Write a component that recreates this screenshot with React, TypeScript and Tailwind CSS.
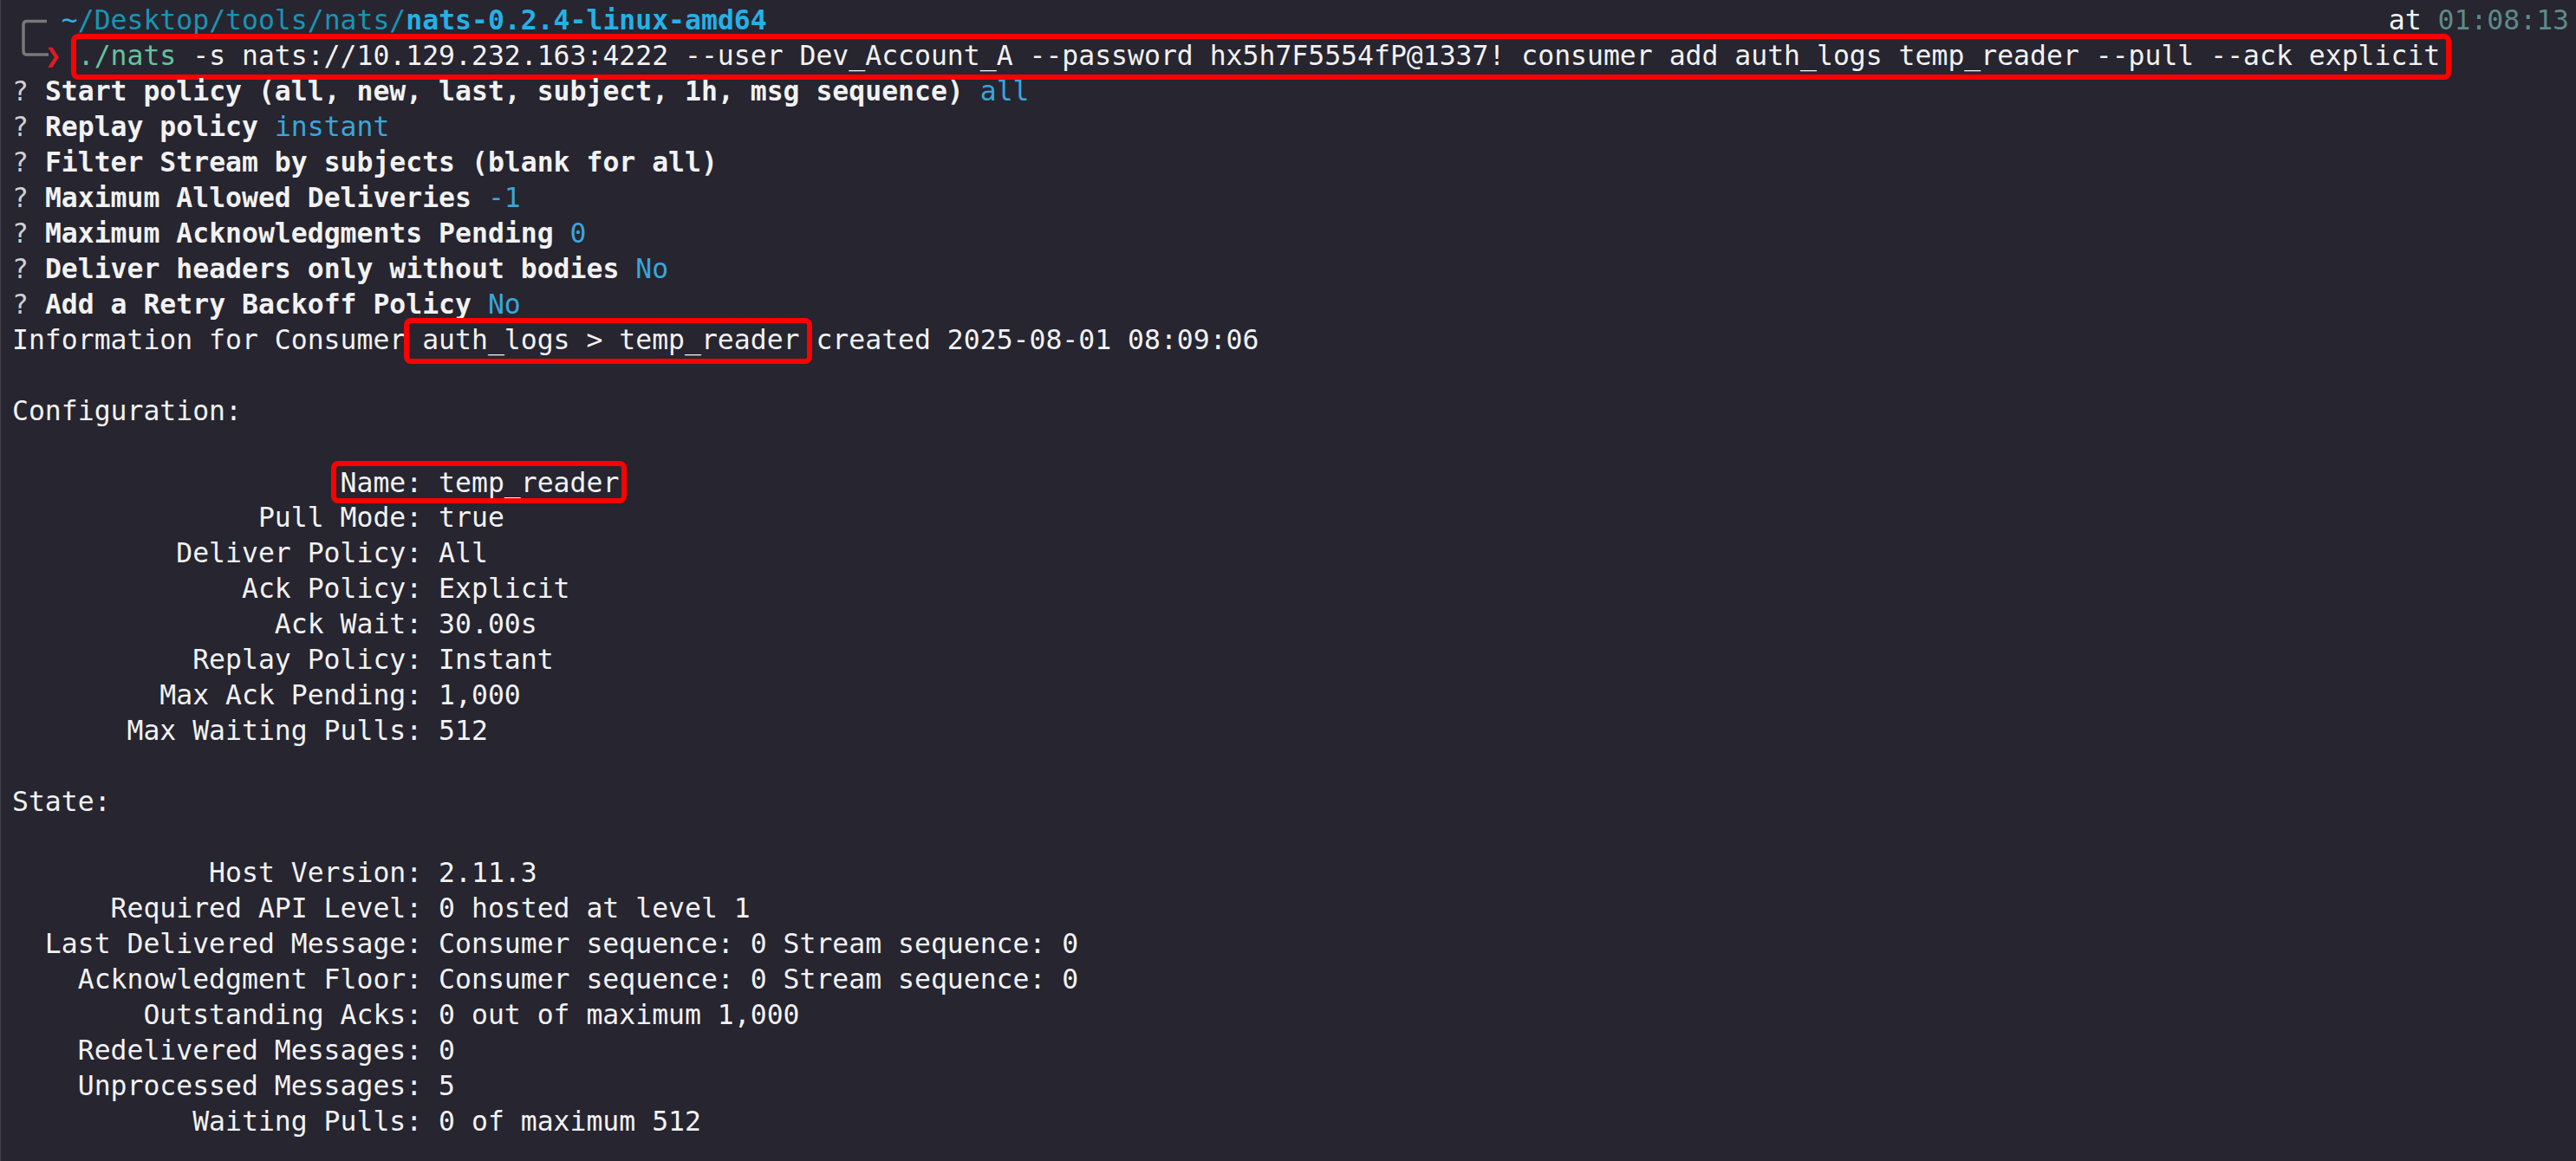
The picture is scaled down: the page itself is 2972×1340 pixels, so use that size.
import React from 'react'

const questions: { label: string; value?: string }[] = [
  { label: 'Start policy (all, new, last, subject, 1h, msg sequence)', value: 'all' },
  { label: 'Replay policy', value: 'instant' },
  { label: 'Filter Stream by subjects (blank for all)' },
  { label: 'Maximum Allowed Deliveries', value: '-1' },
  { label: 'Maximum Acknowledgments Pending', value: '0' },
  { label: 'Deliver headers only without bodies', value: 'No' },
  { label: 'Add a Retry Backoff Policy', value: 'No' },
]

const config: [string, string][] = [
  ['Pull Mode', 'true'],
  ['Deliver Policy', 'All'],
  ['Ack Policy', 'Explicit'],
  ['Ack Wait', '30.00s'],
  ['Replay Policy', 'Instant'],
  ['Max Ack Pending', '1,000'],
  ['Max Waiting Pulls', '512'],
]

const state: [string, string][] = [
  ['Host Version', '2.11.3'],
  ['Required API Level', '0 hosted at level 1'],
  ['Last Delivered Message', 'Consumer sequence: 0 Stream sequence: 0'],
  ['Acknowledgment Floor', 'Consumer sequence: 0 Stream sequence: 0'],
  ['Outstanding Acks', '0 out of maximum 1,000'],
  ['Redelivered Messages', '0'],
  ['Unprocessed Messages', '5'],
  ['Waiting Pulls', '0 of maximum 512'],
]

// right-align labels so every colon lands in column 24
const pad = (label: string) => (label + ':').padStart(25)

function Blank() {
  return <div>{'\u00a0'}</div>
}

function KeyValue({ label, value }: { label: string; value: string }) {
  return <div>{pad(label) + ' ' + value}</div>
}

export default function App() {
  return (
    <div className="w-[2972px] h-[1340px] overflow-hidden bg-[#262530] border-l border-[#45444e] pl-[13px] pr-[8px] pt-[3px] font-['DejaVu_Sans_Mono',monospace] text-[31.44px] leading-[41px] text-[#f2f2f2] whitespace-pre">
      {/* prompt */}
      <div className="flex">
        <div className="w-[37.86px] shrink-0">
          <svg width="42" height="82" viewBox="0 0 42 82" className="overflow-visible">
            <path
              d="M40 21.5 H17 Q13 21.5 13 25.5 V56 Q13 60 17 60 H42"
              fill="none"
              stroke="#787878"
              strokeWidth="3.5"
            />
          </svg>
        </div>
        <div className="flex-1">
          <div className="flex justify-between">
            <div>
              {' '}
              <span className="text-[#2fb2e3]">~</span>
              <span className="text-[#1b93b3]">/Desktop/tools/nats/</span>
              <span className="font-bold text-[#24b1e6]">nats-0.2.4-linux-amd64</span>
            </div>
            <div>
              at <span className="text-[#5e8a89]">01:08:13</span>
            </div>
          </div>
          <div>
            <span className="inline-block w-[18.93px] font-bold text-[#e01b24]">❯</span>{' '}
            <span className="-ml-[2px] pl-[2px] pr-[7px] pt-[1px] pb-[4px] rounded-[2px] outline-[6px] outline-solid outline-[#ff0000]">
              <span className="text-[#66c29d]">./nats</span> -s nats://10.129.232.163:4222 --user Dev_Account_A --password hx5h7F5554fP@1337! consumer add auth_logs temp_reader --pull --ack explicit
            </span>
          </div>
        </div>
      </div>

      {questions.map((q) => (
        <div key={q.label}>
          <span className="text-[#d0d0d0]">?</span> <span className="font-bold">{q.label}</span>
          {q.value && (
            <>
              {' '}
              <span className="text-[#3aa6d9]">{q.value}</span>
            </>
          )}
        </div>
      ))}

      <div>
        {'Information for Consumer '}
        <span className="-ml-[15px] pl-[15px] -mr-[8px] pr-[8px] pt-[1px] pb-[4px] rounded-[2px] outline-[6px] outline-solid outline-[#ff0000]">
          auth_logs &gt; temp_reader
        </span>
        {' created 2025-08-01 08:09:06'}
      </div>
      <Blank />
      <div>Configuration:</div>
      <Blank />
      <div>
        {' '.repeat(20)}
        <span className="-ml-[5px] pl-[5px] pr-[3px] pt-[0.5px] pb-[1px] rounded-[2px] outline-[6px] outline-solid outline-[#ff0000]">
          Name: temp_reader
        </span>
      </div>
      {config.map(([k, v]) => (
        <KeyValue key={k} label={k} value={v} />
      ))}
      <Blank />
      <div>State:</div>
      <Blank />
      {state.map(([k, v]) => (
        <KeyValue key={k} label={k} value={v} />
      ))}
    </div>
  )
}
